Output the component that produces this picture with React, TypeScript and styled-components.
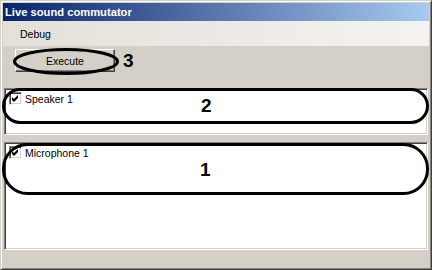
import React from "react";
import styled, { createGlobalStyle } from "styled-components";

const Global = createGlobalStyle`
  html, body { margin: 0; padding: 0; background: #d4d0c8; overflow: hidden; }
  * { box-sizing: border-box; }
`;

const Window = styled.div`
  position: relative;
  width: 432px;
  height: 270px;
  display: flex;
  flex-direction: column;
  background: #d4d0c8;
  border: 1px solid;
  border-color: #d4d0c8 #404040 #404040 #d4d0c8;
  box-shadow: inset 1px 1px #ffffff, inset -1px -1px #808080;
  padding: 2px;
  font-family: "Liberation Sans", Arial, sans-serif;
  font-size: 10.5px;
  color: #000;
`;

const TitleBar = styled.div`
  height: 18px;
  flex: none;
  display: flex;
  align-items: center;
  padding-left: 2px;
  background: linear-gradient(to right, #0a246a, #a6caf0);
  color: #fff;
  font-weight: bold;
  font-size: 11.2px;
`;

const MenuBar = styled.div`
  height: 25px;
  flex: none;
  display: flex;
  align-items: center;
  padding-left: 17px;
  background: linear-gradient(to right, #e3e0da, #f4f3f1);
`;

const MenuItem = styled.span`
  padding-top: 1px;
`;

const Body = styled.div`
  flex: 1;
  display: flex;
  flex-direction: column;
  padding: 3px 1px 15px 1px;
`;

const ToolRow = styled.div`
  height: 23px;
  display: flex;
  align-items: center;
  padding-left: 11px;
  margin-bottom: 16px;
`;

const Button = styled.button`
  width: 100px;
  height: 23px;
  padding: 0;
  background: #d4d0c8;
  border: 1px solid;
  border-color: #ffffff #404040 #404040 #ffffff;
  box-shadow: inset -1px -1px #808080;
  font-family: inherit;
  font-size: 10.5px;
  color: #000;
`;

const Panel = styled.div<{ $h: number; $gap?: number }>`
  height: ${(p) => p.$h}px;
  margin-bottom: ${(p) => p.$gap ?? 0}px;
  flex: none;
  background: #fff;
  border: 1px solid;
  border-color: #808080 #ffffff #ffffff #808080;
  box-shadow: inset 1px 1px #404040, inset -1px -1px #d4d0c8;
  padding: 3px 4px;
`;

const Row = styled.label`
  display: flex;
  align-items: center;
  gap: 3px;
  height: 13px;
`;

const Check = styled.span`
  width: 13px;
  height: 13px;
  flex: none;
  background: #fff;
  border: 1px solid;
  border-color: #808080 #ffffff #ffffff #808080;
  box-shadow: inset 1px 1px #404040, inset -1px -1px #d4d0c8;
  display: flex;
  align-items: center;
  justify-content: center;
`;

const Overlay = styled.svg`
  position: absolute;
  left: 0;
  top: 0;
  pointer-events: none;
`;

const Mark = styled.span<{ $x: number; $y: number }>`
  position: absolute;
  left: ${(p) => p.$x}px;
  top: ${(p) => p.$y}px;
  font-family: "Liberation Sans", Arial, sans-serif;
  font-weight: bold;
  font-size: 19px;
  line-height: 1;
  color: #000;
`;

function CheckBox() {
  return (
    <Check>
      <svg width="7" height="7" viewBox="0 0 7 7">
        <path d="M0 2 L2 4 L6 0 L6 3 L2 7 L0 5 Z" fill="#000" />
      </svg>
    </Check>
  );
}

export default function App() {
  return (
    <>
      <Global />
      <Window>
        <TitleBar>Live sound commutator</TitleBar>
        <MenuBar>
          <MenuItem>Debug</MenuItem>
        </MenuBar>
        <Body>
          <ToolRow>
            <Button>Execute</Button>
          </ToolRow>
          <Panel $h={47} $gap={7}>
            <Row>
              <CheckBox />
              Speaker 1
            </Row>
          </Panel>
          <Panel $h={108}>
            <Row>
              <CheckBox />
              Microphone 1
            </Row>
          </Panel>
        </Body>
        <Overlay width="432" height="270" viewBox="0 0 432 270">
          <ellipse cx="65" cy="60.5" rx="51.5" ry="12" fill="none" stroke="#000" strokeWidth="3" />
          <rect x="2.5" y="88.5" width="424" height="33" rx="16.5" fill="none" stroke="#000" strokeWidth="3" />
          <rect x="2.5" y="143.5" width="424" height="49" rx="24" fill="none" stroke="#000" strokeWidth="3" />
        </Overlay>
        <Mark $x={122} $y={50}>3</Mark>
        <Mark $x={200} $y={95}>2</Mark>
        <Mark $x={199} $y={159}>1</Mark>
      </Window>
    </>
  );
}
